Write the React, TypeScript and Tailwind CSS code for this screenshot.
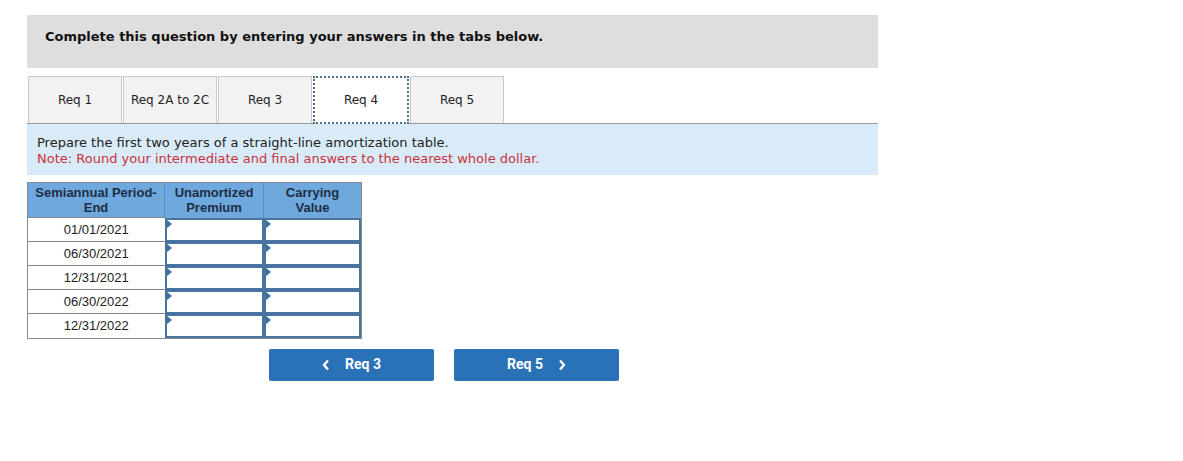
import React from "react";

const tabs = ["Req 1", "Req 2A to 2C", "Req 3", "Req 4", "Req 5"];
const dates = ["01/01/2021", "06/30/2021", "12/31/2021", "06/30/2022", "12/31/2022"];

function InputCell() {
  return (
    <td className="p-0 h-[24px]">
      <div className="relative h-[24px] border-2 border-[#4a74a0] bg-white">
        <div className="absolute left-0 top-0 w-0 h-0 border-t-[4px] border-b-[4px] border-l-[5px] border-t-transparent border-b-transparent border-l-[#3c6fa8]" />
      </div>
    </td>
  );
}

export default function App() {
  return (
    <div className="bg-white w-[1183px] h-[461px] pt-[15px] pl-[27px]" style={{ fontFamily: "'DejaVu Sans', Verdana, sans-serif" }}>
      <div className="w-[851px]">
        <div className="h-[53px] bg-[#dedede] pl-[18px] pt-[14px] text-[13px] leading-[16px] font-bold text-[#111]">
          Complete this question by entering your answers in the tabs below.
        </div>
        <div className="flex gap-[1px] mt-[8px] pl-[1px] h-[47px]">
          {tabs.map((t, i) =>
            i === 3 ? (
              <div key={t} className="w-[96px] h-[48px] bg-white border-2 border-dotted border-[#4b6f94] flex items-center justify-center text-[12px] text-[#222] relative z-10">
                {t}
              </div>
            ) : (
              <div key={t} className="w-[94px] h-[47px] bg-[#f2f2f2] border border-[#c8c8c8] border-b-0 flex items-center justify-center text-[12px] text-[#222]">
                {t}
              </div>
            )
          )}
        </div>
        <div className="border-t border-[#9a9a9a] bg-[#d9ebf8] h-[52px] pl-[10px] pt-[11px] text-[13px] leading-[16px]">
          <div className="text-[#222]">Prepare the first two years of a straight-line amortization table.</div>
          <div className="text-[#c8323a]">Note: Round your intermediate and final answers to the nearest whole dollar.</div>
        </div>
      </div>
      <table className="mt-[7px] border-collapse border border-[#8a8a8a]" style={{ fontFamily: "'Liberation Sans', Arial, sans-serif" }}>
        <thead>
          <tr className="bg-[#6fa8dc] h-[35px] text-[13px] font-bold text-[#1d2d44] leading-[15px]">
            <th className="w-[137px] p-0 font-bold border-r border-[#5a8bb8]">Semiannual Period-<br />End</th>
            <th className="w-[99px] p-0 font-bold border-r border-[#5a8bb8]">Unamortized<br />Premium</th>
            <th className="w-[98px] p-0 font-bold">Carrying<br />Value</th>
          </tr>
        </thead>
        <tbody>
          {dates.map((d) => (
            <tr key={d} className="h-[24px]">
              <td className="text-center text-[13px] text-[#222] border-t border-[#8a8a8a] bg-white p-0">{d}</td>
              <InputCell />
              <InputCell />
            </tr>
          ))}
        </tbody>
      </table>
      <div className="flex gap-[20px] ml-[242px] mt-[10px]" style={{ fontFamily: "Roboto, sans-serif" }}>
        <button className="w-[165px] h-[32px] bg-[#2a72b8] rounded-[2px] text-white font-bold text-[14px] flex items-center justify-center gap-[15px]">
          <svg width="8" height="12" viewBox="0 0 8 12"><path d="M6 1.5 L2 6 L6 10.5" stroke="white" strokeWidth="2.4" fill="none" /></svg>
          Req 3
        </button>
        <button className="w-[165px] h-[32px] bg-[#2a72b8] rounded-[2px] text-white font-bold text-[14px] flex items-center justify-center gap-[15px]">
          Req 5
          <svg width="8" height="12" viewBox="0 0 8 12"><path d="M2 1.5 L6 6 L2 10.5" stroke="white" strokeWidth="2.4" fill="none" /></svg>
        </button>
      </div>
    </div>
  );
}
